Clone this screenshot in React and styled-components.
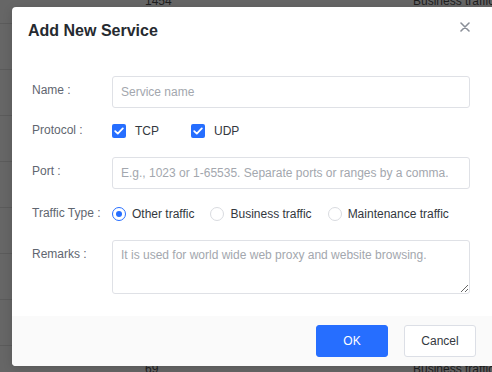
import React from 'react';
import styled, { createGlobalStyle } from 'styled-components';

const GlobalStyle = createGlobalStyle`
  html, body {
    margin: 0;
    padding: 0;
    background: #666666;
    font-family: "Liberation Sans", Arial, sans-serif;
    overflow: hidden;
  }
`;

const Page = styled.div`
  position: relative;
  width: 492px;
  height: 372px;
  overflow: hidden;
  background: #666666;
`;

const BackTable = styled.div`
  margin-top: -22px;
`;

const BackRow = styled.div`
  display: grid;
  grid-template-columns: 145px 268px 1fr;
  align-items: center;
  height: 45px;
  border-bottom: 1px solid #5b5b5b;
  font-size: 12px;
  color: #1e1e1e;
  white-space: nowrap;
`;

const Modal = styled.div`
  position: absolute;
  left: 12px;
  top: 7px;
  width: 490px;
  height: 359px;
  background: #ffffff;
  border-radius: 4px;
  display: flex;
  flex-direction: column;
  overflow: hidden;
  box-shadow: 0 2px 10px rgba(0, 0, 0, 0.15);
`;

const Header = styled.div`
  height: 48px;
  flex-shrink: 0;
  display: flex;
  align-items: center;
  justify-content: space-between;
  padding: 0 32px 0 16px;
`;

const Title = styled.h2`
  margin: 0;
  font-size: 16px;
  font-weight: 700;
  color: #262a30;
`;

const CloseButton = styled.button`
  align-self: flex-start;
  margin-top: 15px;
  padding: 0;
  border: none;
  background: none;
  width: 10px;
  height: 10px;
  display: flex;
  cursor: pointer;
`;

const Body = styled.div`
  flex: 1;
  padding: 21px 32px 0 20px;
`;

const FormRow = styled.div`
  display: flex;
  align-items: flex-start;
  margin-bottom: ${(p) => p.$space}px;
`;

const Label = styled.label`
  width: 80px;
  flex-shrink: 0;
  font-size: 12px;
  color: #5f6670;
  line-height: ${(p) => (p.$inline ? '15px' : '28px')};
`;

const TextInput = styled.input`
  box-sizing: border-box;
  width: 358px;
  height: 32px;
  padding: 0 8px;
  border: 1px solid #dfe1e6;
  border-radius: 3px;
  font-family: inherit;
  font-size: 12px;
  color: #333;
  outline: none;

  &::placeholder {
    color: #a3a7ae;
  }
`;

const TextArea = styled.textarea`
  box-sizing: border-box;
  width: 358px;
  height: 54px;
  padding: 5px 8px;
  border: 1px solid #dfe1e6;
  border-radius: 3px;
  font-family: inherit;
  font-size: 12px;
  line-height: 18px;
  color: #333;
  resize: vertical;
  outline: none;

  &::placeholder {
    color: #a3a7ae;
  }
`;

const Choices = styled.div`
  display: flex;
  align-items: center;
  gap: ${(p) => p.$gap}px;
  height: 15px;
`;

const Choice = styled.label`
  display: flex;
  align-items: center;
  gap: ${(p) => p.$gap}px;
  font-size: 12px;
  color: #333840;
  cursor: pointer;
`;

const CheckBox = styled.span`
  width: 14px;
  height: 14px;
  border-radius: 2px;
  background: #266eff;
  display: flex;
  align-items: center;
  justify-content: center;
`;

const Radio = styled.span`
  box-sizing: border-box;
  width: 14px;
  height: 14px;
  border-radius: 50%;
  border: 1px solid ${(p) => (p.$checked ? '#266eff' : '#d9dbe0')};
  display: flex;
  align-items: center;
  justify-content: center;

  &::after {
    content: '';
    display: ${(p) => (p.$checked ? 'block' : 'none')};
    width: 6px;
    height: 6px;
    border-radius: 50%;
    background: #266eff;
  }
`;

const Footer = styled.div`
  height: 50px;
  flex-shrink: 0;
  background: #fafafa;
  display: flex;
  align-items: center;
  justify-content: flex-end;
  gap: 16px;
  padding-right: 26px;
`;

const Button = styled.button`
  box-sizing: border-box;
  width: 72px;
  height: 32px;
  border-radius: 3px;
  font-family: inherit;
  font-size: 12px;
  cursor: pointer;
  border: 1px solid ${(p) => (p.$primary ? '#266eff' : '#dcdfe6')};
  background: ${(p) => (p.$primary ? '#266eff' : '#ffffff')};
  color: ${(p) => (p.$primary ? '#ffffff' : '#333840')};
`;

const backRows = [
  ['1454', 'Business traffic'],
  ['', ''],
  ['', ''],
  ['', ''],
  ['', ''],
  ['', ''],
  ['', ''],
  ['', ''],
  ['69', 'Business traffic'],
];

const Check = () => (
  <CheckBox>
    <svg width="10" height="8" viewBox="0 0 10 8">
      <path d="M1.2 4.1 L3.8 6.6 L8.8 1.4" fill="none" stroke="#fff" strokeWidth="1.8" strokeLinecap="round" strokeLinejoin="round" />
    </svg>
  </CheckBox>
);

const App = () => {
  return (
    <Page>
      <GlobalStyle />
      <BackTable>
        {backRows.map((row, index) => (
          <BackRow key={index}>
            <span />
            <span>{row[0]}</span>
            <span>{row[1]}</span>
          </BackRow>
        ))}
      </BackTable>

      <Modal>
        <Header>
          <Title>Add New Service</Title>
          <CloseButton aria-label="Close">
            <svg width="10" height="10" viewBox="0 0 10 10">
              <path d="M1 1 L9 9 M9 1 L1 9" stroke="#8a8f98" strokeWidth="1.6" strokeLinecap="round" />
            </svg>
          </CloseButton>
        </Header>

        <Body>
          <FormRow $space={15}>
            <Label>Name :</Label>
            <TextInput placeholder="Service name" />
          </FormRow>

          <FormRow $space={19}>
            <Label $inline>Protocol :</Label>
            <Choices $gap={32}>
              <Choice $gap={9}><Check />TCP</Choice>
              <Choice $gap={9}><Check />UDP</Choice>
            </Choices>
          </FormRow>

          <FormRow $space={17}>
            <Label>Port :</Label>
            <TextInput placeholder="E.g., 1023 or 1-65535. Separate ports or ranges by a comma." />
          </FormRow>

          <FormRow $space={19}>
            <Label $inline>Traffic Type :</Label>
            <Choices $gap={16}>
              <Choice $gap={6}><Radio $checked />Other traffic</Choice>
              <Choice $gap={6}><Radio />Business traffic</Choice>
              <Choice $gap={6}><Radio />Maintenance traffic</Choice>
            </Choices>
          </FormRow>

          <FormRow $space={0}>
            <Label>Remarks :</Label>
            <TextArea placeholder="It is used for world wide web proxy and website browsing." />
          </FormRow>
        </Body>

        <Footer>
          <Button $primary>OK</Button>
          <Button>Cancel</Button>
        </Footer>
      </Modal>
    </Page>
  );
};

export default App;
